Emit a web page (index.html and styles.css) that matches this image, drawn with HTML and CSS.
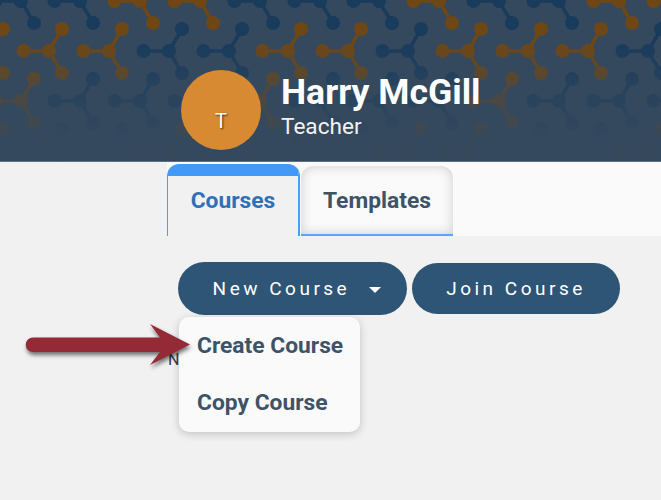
FILE: index.html
```html
<!DOCTYPE html>
<html lang="en">
<head>
    <meta charset="UTF-8">
    <title>Courses</title>
    <link rel="stylesheet" href="styles.css">
</head>
<body>
    <div class="header">
        <svg class="header-pattern" width="661" height="161" viewBox="0 0 661 161" aria-hidden="true">
            <defs>
                <g id="mol">
                    <path d="M-25 0H0M13 -22L0 0L13 22" fill="none" stroke="currentColor" stroke-width="3.5"/>
                    <circle r="7"/><circle cx="-25.5" r="7"/><circle cx="13" cy="-22" r="7"/><circle cx="13" cy="22" r="7"/>
                </g>
                <linearGradient id="fade" x1="0" y1="0" x2="0" y2="1">
                    <stop offset="0.25" stop-color="#34495e" stop-opacity="0"/>
                    <stop offset="0.6" stop-color="#34495e" stop-opacity="0.6"/>
                    <stop offset="0.85" stop-color="#34495e" stop-opacity="0.92"/>
                    <stop offset="1" stop-color="#34495e" stop-opacity="1"/>
                </linearGradient>
            </defs>
            <g class="mol-blue">
                <use href="#mol" x="21" y="1"/><use href="#mol" x="80" y="1"/><use href="#mol" x="260" y="1"/>
                <use href="#mol" x="320" y="1"/><use href="#mol" x="379" y="1"/><use href="#mol" x="499" y="1"/>
                <use href="#mol" x="559" y="1"/>
                <use href="#mol" x="169" y="51"/><use href="#mol" x="229" y="51"/><use href="#mol" x="408" y="51"/>
                <use href="#mol" x="648" y="51"/>
                <use href="#mol" x="80" y="101"/><use href="#mol" x="140" y="101"/><use href="#mol" x="200" y="101"/>
                <use href="#mol" x="320" y="101"/><use href="#mol" x="379" y="101"/><use href="#mol" x="439" y="101"/>
                <use href="#mol" x="559" y="101"/><use href="#mol" x="619" y="101"/><use href="#mol" x="679" y="101"/>
                <use href="#mol" x="49" y="151"/><use href="#mol" x="109" y="151"/><use href="#mol" x="229" y="151"/>
                <use href="#mol" x="288" y="151"/><use href="#mol" x="348" y="151"/><use href="#mol" x="528" y="151"/>
                <use href="#mol" x="588" y="151"/>
            </g>
            <g class="mol-orange">
                <use href="#mol" x="140" y="1"/><use href="#mol" x="200" y="1"/><use href="#mol" x="439" y="1"/>
                <use href="#mol" x="619" y="1"/><use href="#mol" x="679" y="1"/>
                <use href="#mol" x="-10" y="51"/><use href="#mol" x="49" y="51"/><use href="#mol" x="109" y="51"/>
                <use href="#mol" x="288" y="51"/><use href="#mol" x="348" y="51"/><use href="#mol" x="468" y="51"/>
                <use href="#mol" x="528" y="51"/><use href="#mol" x="588" y="51"/>
                <use href="#mol" x="21" y="101"/><use href="#mol" x="260" y="101"/><use href="#mol" x="499" y="101"/>
                <use href="#mol" x="-10" y="151"/><use href="#mol" x="169" y="151"/><use href="#mol" x="408" y="151"/>
                <use href="#mol" x="468" y="151"/><use href="#mol" x="648" y="151"/>
            </g>
            <rect width="661" height="161" fill="url(#fade)"/>
        </svg>
        <div class="avatar"><span>T</span></div>
        <div class="user-info">
            <div class="user-name">Harry McGill</div>
            <div class="user-role">Teacher</div>
        </div>
    </div>

    <div class="tabs-bar">
        <div class="tab tab-active">Courses</div>
        <div class="tab">Templates</div>
    </div>

    <div class="content">
        <div class="actions">
            <div class="btn btn-new">New Course <span class="caret"></span></div>
            <div class="btn btn-join">Join Course</div>
        </div>
        <div class="menu">
            <div class="menu-item">Create Course</div>
            <div class="menu-item">Copy Course</div>
        </div>
        <p class="empty">N</p>
    </div>

    <svg class="arrow" width="190" height="70" viewBox="0 0 190 70" aria-hidden="true">
        <path d="M8 20.5H135L125 7L165 27.5L125 48L135 35H8A7.25 7.25 0 0 1 8 20.5Z" fill="#932a36"/>
    </svg>
</body>
</html>
```

FILE: styles.css
```css
* {
    margin: 0;
    padding: 0;
    box-sizing: border-box;
}

body {
    font-family: Roboto, sans-serif;
    width: 661px;
    height: 500px;
    overflow: hidden;
    background-color: #f1f1f1;
    position: relative;
}

.header {
    height: 162px;
    background-color: #34495e;
    border-bottom: 1px solid #5d7082;
    position: relative;
    overflow: hidden;
    display: flex;
    align-items: flex-start;
    padding: 70px 0 0 181px;
    gap: 20px;
}

.header-pattern {
    position: absolute;
    top: 0;
    left: 0;
}

.mol-blue {
    fill: #193b5c;
    color: #193b5c;
}

.mol-orange {
    fill: #6f4714;
    color: #6f4714;
}

.avatar {
    width: 80px;
    height: 80px;
    border-radius: 50%;
    background-color: #d78a31;
    color: white;
    font-size: 20px;
    display: flex;
    align-items: flex-end;
    justify-content: center;
    padding-bottom: 17px;
    text-shadow: 1px 1px 2px rgba(0, 0, 0, 0.7);
    position: relative;
    flex-shrink: 0;
}

.user-info {
    position: relative;
    color: white;
    margin-top: 2px;
}

.user-name {
    font-size: 35.6px;
    font-weight: 700;
    line-height: 40px;
}

.user-role {
    font-size: 22.6px;
    line-height: 30px;
    color: #f2f2f2;
}

.tabs-bar {
    height: 74px;
    margin-left: 167px;
    background-color: #fafafa;
    display: flex;
    align-items: flex-end;
    gap: 1px;
}

.tab {
    width: 152px;
    height: 70px;
    background-color: #fafafa;
    border-bottom: 2px solid #5aa5f5;
    border-radius: 12px 12px 0 0;
    box-shadow: inset 0 0 12px rgba(0, 0, 0, 0.18);
    color: #3f5368;
    font-size: 22.8px;
    font-weight: 700;
    display: flex;
    align-items: center;
    justify-content: center;
}

.tab-active {
    width: 133px;
    height: 72px;
    background-color: #f1f1f1;
    border: solid #4a9df8;
    border-width: 12px 2px 0 1px;
    border-top-color: #4299f8;
    box-shadow: none;
    color: #2f71b8;
    padding-bottom: 11px;
}

.content {
    position: relative;
    padding: 26px 0 0 168px;
}

.actions {
    display: flex;
    align-items: center;
    gap: 5px;
    padding-left: 10px;
}

.btn {
    background-color: #2f5576;
    color: white;
    font-size: 19px;
    letter-spacing: 3.5px;
    border-radius: 27px;
    display: flex;
    align-items: center;
    justify-content: center;
    white-space: pre;
}

.btn-new {
    width: 229px;
    height: 53px;
    padding-left: 9px;
}

.btn-join {
    width: 208px;
    height: 51px;
}

.caret {
    width: 0;
    height: 0;
    border: solid transparent;
    border-width: 6px 6.5px 0;
    border-top-color: white;
    margin: 3px 0 0 11px;
}

.menu {
    position: absolute;
    top: 81px;
    left: 179px;
    width: 181px;
    height: 115px;
    background-color: #fafafa;
    border-radius: 10px;
    box-shadow: 0 2px 8px rgba(0, 0, 0, 0.2);
    padding: 1px 0 0 18px;
    color: #3f5368;
    font-size: 22.8px;
    font-weight: 700;
}

.menu-item {
    height: 57px;
    line-height: 55px;
}

.empty {
    margin-top: 35px;
    font-size: 16px;
    color: #2c3e50;
}

.arrow {
    position: absolute;
    left: 25px;
    top: 317px;
    filter: drop-shadow(1px 3px 2px rgba(0, 0, 0, 0.55));
}
```
